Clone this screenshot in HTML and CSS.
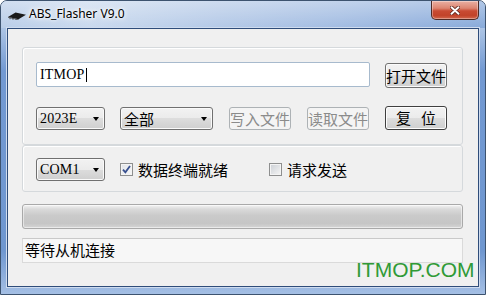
FILE: index.html
```html
<!DOCTYPE html>
<html lang="zh">
<head>
    <meta charset="UTF-8">
    <title>ABS_Flasher V9.0</title>
    <link rel="stylesheet" href="styles.css">
</head>
<body>
    <div class="window">
        <div class="titlebar">
            <!-- chip icon -->
            <svg class="app-icon" width="18" height="8" viewBox="0 0 18 8">
                <polygon points="0,5 7.5,0.5 18,2.8 10.5,7.2" fill="#1a1a1a"/>
                <polygon points="0,5 10.5,7.2 10.5,8 0,5.8" fill="#4a4a4a"/>
                <line x1="2" y1="5.6" x2="2" y2="7.2" stroke="#333" stroke-width="0.9"/>
                <line x1="5" y1="6.2" x2="5" y2="7.8" stroke="#333" stroke-width="0.9"/>
                <line x1="8" y1="6.8" x2="8" y2="8" stroke="#333" stroke-width="0.9"/>
            </svg>
            <span class="title">ABS_Flasher V9.0</span>
            <div class="close">
                <svg width="10" height="9" viewBox="0 0 10 9">
                    <path d="M1.5 1.2 L8.5 7.8 M8.5 1.2 L1.5 7.8" stroke="#5b2016" stroke-width="3.6" stroke-linecap="round"/>
                    <path d="M1.5 1.2 L8.5 7.8 M8.5 1.2 L1.5 7.8" stroke="#fff" stroke-width="2" stroke-linecap="round"/>
                </svg>
            </div>
        </div>

        <div class="client">
            <div class="group group-main">
                <div class="row row-file">
                    <div class="textbox mono">ITMOP<span class="caret"></span></div>
                    <button class="btn">打开文件</button>
                </div>
                <div class="row row-actions">
                    <div class="combo combo-year"><span class="mono">2023E</span><i class="arrow"></i></div>
                    <div class="combo combo-mode"><span>全部</span><i class="arrow"></i></div>
                    <button class="btn" disabled>写入文件</button>
                    <button class="btn" disabled>读取文件</button>
                    <button class="btn btn-default">复<span class="gap"></span>位</button>
                </div>
            </div>

            <div class="group group-port">
                <div class="row">
                    <div class="combo combo-port"><span class="mono">COM1</span><i class="arrow"></i></div>
                    <label class="check check-dtr">
                        <span class="box checked">
                            <svg width="9" height="9" viewBox="0 0 9 9">
                                <path d="M1 4.6 L3.4 7.4 L8 1" fill="none" stroke="#38508f" stroke-width="1.8"/>
                            </svg>
                        </span>
                        数据终端就绪
                    </label>
                    <label class="check"><span class="box"></span>请求发送</label>
                </div>
            </div>

            <div class="progress"></div>
            <div class="status">等待从机连接</div>
        </div>

        <div class="watermark">ITMOP.COM</div>
    </div>
</body>
</html>
```

FILE: styles.css
```css
* {
    box-sizing: border-box;
}

body {
    margin: 0;
    background: #fff;
    font-family: "Noto Sans CJK SC", sans-serif;
    color: #000;
}

/* SimSun-like ascii */
.mono {
    font-family: "Liberation Serif", "Noto Sans CJK SC", serif;
    font-size: 14px;
    letter-spacing: 0.2px;
}

/* window frame */
.window {
    position: relative;
    width: 486px;
    height: 295px;
    border: 1px solid #3d536f;
    border-radius: 7px 7px 0 0;
    padding: 0 6px 7px;
    display: flex;
    flex-direction: column;
    overflow: hidden;
    background: linear-gradient(to bottom, #c3d5ec 0, #a9c2e4 30px, #7299d2 70px, #6f97d0 250px, #a7c1e5 295px);
}

.titlebar {
    height: 27px;
    margin: 0 -6px;
    padding: 0 6px 0 7px;
    display: flex;
    align-items: flex-start;
    background:
        linear-gradient(to bottom, rgba(255,255,255,0.35), rgba(255,255,255,0) 27px),
        linear-gradient(to right, #b9cde8 0%, #c9d9ee 18%, #b4c9e7 45%, #a2bce2 70%, #88aada 100%);
}

.app-icon {
    margin-top: 11px;
}

.title {
    margin: 5px 0 0 3px;
    font-family: "Noto Sans", sans-serif;
    font-size: 12px;
    line-height: 16px;
    text-shadow: 0 0 5px #fff, 0 0 3px #fff, 0 0 8px rgba(255,255,255,0.8);
}

.close {
    margin-left: auto;
    width: 48px;
    height: 19px;
    border: 1px solid #4e2b26;
    border-top: none;
    border-radius: 0 0 5px 5px;
    display: flex;
    align-items: center;
    justify-content: center;
    background: linear-gradient(to bottom, #eab0a3 0%, #dd8571 40%, #c94b33 55%, #c2432a 80%, #d2674c 100%);
    box-shadow: inset 0 0 0 1px rgba(255,255,255,0.35);
}

/* client area */
.client {
    flex: 1;
    border: 1px solid #2f4d7a;
    box-shadow: 0 0 0 1px #cfdcef;
    background: #f0f0f0;
    padding: 18px 15px 0 14px;
    display: flex;
    flex-direction: column;
}

.group {
    border: 1px solid #d5d9dc;
    border-radius: 3px;
    box-shadow: inset 1px 1px 0 #fff;
    padding-left: 13px;
}

.group-main {
    height: 98px;
    padding-top: 14px;
}

.group-port {
    height: 47px;
    padding-top: 12px;
}

.row {
    display: flex;
    align-items: center;
}

.row-file {
    align-items: flex-start;
    height: 26px;
}

.row-actions {
    margin-top: 18px;
    align-items: flex-end;
    height: 24px;
}

.textbox {
    width: 334px;
    height: 25px;
    border: 1px solid #a7bacd;
    border-radius: 2px;
    background: #fff;
    display: flex;
    align-items: center;
    padding-left: 3px;
    margin-right: 15px;
}

.caret {
    display: inline-block;
    width: 1px;
    height: 14px;
    background: #000;
    margin-left: 1px;
}

.btn {
    width: 62px;
    height: 24px;
    padding: 0;
    border: 1px solid #707070;
    border-radius: 3px;
    background: linear-gradient(to bottom, #f2f2f2 0%, #ebebeb 50%, #dddddd 50%, #cfcfcf 100%);
    box-shadow: inset 0 0 0 1px #fbfbfb;
    font-family: "Noto Sans CJK SC", sans-serif;
    font-size: 15px;
    line-height: 20px;
    color: #000;
}

.row-file .btn {
    margin-top: 1px;
    height: 25px;
}

.btn:disabled {
    border-color: #adb2b5;
    background: #f4f4f4;
    box-shadow: none;
    color: #8b8b8b;
    height: 23px;
}

.btn-default {
    border-color: #3f3f3f;
    box-shadow: inset 0 0 0 1px #fdfdfd;
}

.gap {
    display: inline-block;
    width: 10px;
}

.row-actions .btn {
    margin-left: 16px;
}

.combo {
    height: 23px;
    border: 1px solid #707070;
    border-radius: 3px;
    background: linear-gradient(to bottom, #f2f2f2 0%, #ebebeb 50%, #dddddd 50%, #cfcfcf 100%);
    box-shadow: inset 0 0 0 1px #fafafa;
    display: flex;
    align-items: center;
    padding-left: 3px;
    font-size: 15px;
}

.combo-year,
.combo-port {
    width: 69px;
}

.combo-mode {
    width: 93px;
    margin-left: 15px;
}

.arrow {
    margin-left: auto;
    margin-right: 5px;
    width: 0;
    height: 0;
    border-left: 3.5px solid transparent;
    border-right: 3.5px solid transparent;
    border-top: 4px solid #000;
}

/* checkboxes */
.check {
    display: flex;
    align-items: center;
    font-size: 15px;
    margin-left: 15px;
}

.check-dtr {
    width: 134px;
}

.box {
    width: 13px;
    height: 13px;
    margin-right: 5px;
    border: 1px solid #8e8f8f;
    background: linear-gradient(to bottom right, #cbcfd5, #f6f6f6);
    box-shadow: inset 0 0 0 1px #f4f4f4;
    display: flex;
    align-items: center;
    justify-content: center;
}

.box.checked {
    background: linear-gradient(to bottom right, #e0e3e8, #f8f8f8);
}

/* progress + status */
.progress {
    margin-top: 12px;
    height: 25px;
    border: 1px solid #a9a9a9;
    border-radius: 3px;
    background: linear-gradient(to bottom, #f3f3f3 0%, #dadada 18%, #cacaca 45%, #c6c6c6 80%, #d6d6d6 100%);
    box-shadow: inset 0 0 0 1px rgba(255,255,255,0.5);
}

.status {
    margin-top: 9px;
    height: 25px;
    border: 1px solid #dadada;
    border-top-color: #c9c9c9;
    background: #f7f7f7;
    padding-left: 2px;
    font-size: 15px;
    line-height: 22px;
}

.watermark {
    position: absolute;
    left: 355px;
    top: 258px;
    font-family: "Liberation Sans", sans-serif;
    font-size: 21px;
    line-height: 21px;
    color: #2f9a36;
}
```
